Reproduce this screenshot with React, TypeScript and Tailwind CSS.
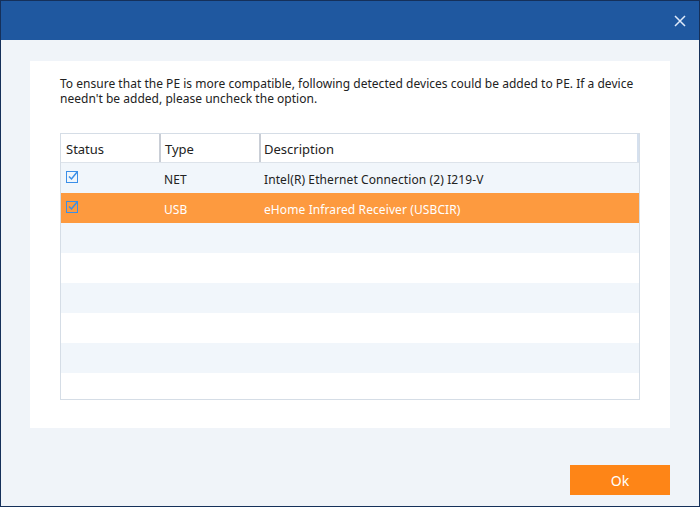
import React from "react";

type Row = { checked: boolean; type: string; desc: string };

const rows: Row[] = [
  { checked: true, type: "NET", desc: "Intel(R) Ethernet Connection (2) I219-V" },
  { checked: true, type: "USB", desc: "eHome Infrared Receiver (USBCIR)" },
];

function CheckIcon() {
  return (
    <svg width="13" height="13" viewBox="0 0 13 13" className="shrink-0">
      <rect x="0.5" y="1.5" width="11" height="11" fill="none" stroke="#3b8fe8" strokeWidth="1" />
      <path d="M3 6.5 L5.5 9 L11.5 1.5" fill="none" stroke="#3b8fe8" strokeWidth="1.5" />
    </svg>
  );
}

export default function App() {
  const selected = 1;
  const total = 8;

  return (
    <div className="w-[700px] h-[507px] flex flex-col border border-[#15305a] bg-[#f0f4f9] text-[13px] text-[#222]" style={{ fontFamily: '"Noto Sans", "Open Sans", sans-serif' }}>
      <header className="h-[39px] bg-[#1f58a0] flex items-center justify-end pr-[13px] shrink-0">
        <svg width="12" height="12" viewBox="0 0 12 12">
          <path d="M1 1 L11 11 M11 1 L1 11" stroke="#dfeafa" strokeWidth="1.5" />
        </svg>
      </header>

      <div className="px-[29px] pt-[21px]">
        <div className="bg-white h-[367px] px-[30px] pt-[15px]">
          <p className="w-[600px] text-[12px] leading-[15px] tracking-[0.02px] text-[#222]">
            To ensure that the PE is more compatible, following detected devices could be added to PE. If a device needn't be added, please uncheck the option.
          </p>

          <div className="mt-[27px] w-[580px] h-[267px] border border-[#d5dde6] flex flex-col overflow-hidden">
            <div className="h-[29px] flex items-stretch border-b border-[#dde3ea] shrink-0 text-[13px]">
              <div className="w-[100px] pl-[5px] pt-[3px] flex items-center border-r-2 border-[#c9ced6]">Status</div>
              <div className="w-[100px] pl-[4px] pt-[3px] flex items-center border-r-2 border-[#c9ced6]">Type</div>
              <div className="flex-1 pl-[3px] pt-[3px] flex items-center border-r-2 border-[#d5e0ee]">Description</div>
            </div>
            {Array.from({ length: total }).map((_, i) => {
              const r = rows[i];
              const isSel = i === selected;
              const bg = isSel ? "bg-[#fd9a3f] text-white" : i % 2 === 0 ? "bg-[#f1f6fb]" : "bg-white";
              return (
                <div key={i} className={`h-[30px] pt-[3px] flex items-center shrink-0 text-[12px] tracking-[0.1px] ${bg}`}>
                  {r && (
                    <>
                      <div className="w-[100px] pl-[5px] flex items-center -mt-[6px]">
                        <CheckIcon />
                      </div>
                      <div className="w-[100px] pl-[3px]">{r.type}</div>
                      <div className="flex-1 pl-[3px]">{r.desc}</div>
                    </>
                  )}
                </div>
              );
            })}
          </div>
        </div>
      </div>

      <div className="flex justify-end px-[29px] pt-[37px]">
        <button className="w-[100px] h-[30px] bg-[#fe8517] text-white text-[14px]">Ok</button>
      </div>
    </div>
  );
}
